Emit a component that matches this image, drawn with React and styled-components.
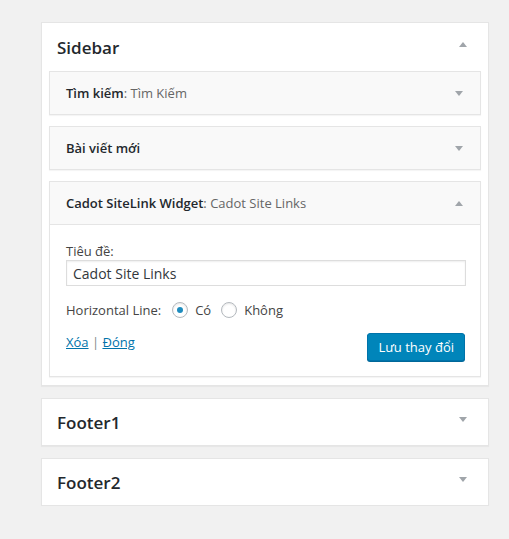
import React from 'react';
import styled, { createGlobalStyle } from 'styled-components';

const Global = createGlobalStyle`
  html, body {
    margin: 0;
    padding: 0;
    background: #f1f1f1;
  }
  body {
    font-family: "Open Sans", "Noto Sans", sans-serif;
    color: #23282d;
  }
`;

const Page = styled.div`
  width: 448px;
  padding: 22px 0 0 41px;
  display: flex;
  flex-direction: column;
  gap: 12px;
`;

const Area = styled.div`
  background: #fff;
  border: 1px solid #e5e5e5;
  box-shadow: 0 1px 1px rgba(0, 0, 0, 0.04);
`;

const AreaHead = styled.div`
  display: flex;
  align-items: center;
  justify-content: space-between;
  height: ${(p) => p.$h}px;
  padding: 0 21px 0 15px;
`;

const AreaTitle = styled.h2`
  margin: 0;
  font-size: 17px;
  font-weight: 600;
  color: #23282d;
  margin-top: ${(p) => p.$dy || 0}px;
`;

const Arrow = styled.span`
  width: 0;
  height: 0;
  border-left: 4px solid transparent;
  border-right: 4px solid transparent;
  ${(p) =>
    p.$up
      ? 'border-bottom: 5px solid #a0a5aa;'
      : 'border-top: 5px solid #a0a5aa;'}
  margin-top: ${(p) => p.$dy || 0}px;
`;

const Widgets = styled.div`
  display: flex;
  flex-direction: column;
  gap: 11px;
  padding: 0 7px 8px 7px;
`;

const Widget = styled.div`
  background: #fff;
  border: 1px solid #e5e5e5;
  box-shadow: 0 1px 1px rgba(0, 0, 0, 0.04);
`;

const WidgetHead = styled.div`
  display: flex;
  align-items: center;
  justify-content: space-between;
  height: 42px;
  padding: 0 17px 0 16px;
  background: #f9f9f9;
  font-size: 13px;
`;

const WidgetName = styled.span`
  font-weight: 600;
  color: #23282d;
`;

const WidgetSub = styled.span`
  font-weight: 400;
  color: #666;
`;

const WidgetBody = styled.div`
  border-top: 1px solid #e5e5e5;
  padding: 17px 15px 15px 16px;
  font-size: 13px;
  color: #444;
`;

const Label = styled.div`
  line-height: 18px;
`;

const Input = styled.input`
  box-sizing: border-box;
  width: 400px;
  height: 26px;
  margin: 0;
  padding: 0 6px;
  border: 1px solid #ddd;
  box-shadow: inset 0 1px 2px rgba(0, 0, 0, 0.07);
  font-family: "Open Sans", sans-serif;
  font-size: 14px;
  color: #32373c;
  outline: none;
`;

const RadioRow = styled.div`
  display: flex;
  align-items: center;
  margin-top: 14px;
  height: 20px;
`;

const RadioLabel = styled.label`
  display: flex;
  align-items: center;
  margin-left: ${(p) => p.$ml}px;
`;

const Radio = styled.span`
  box-sizing: border-box;
  width: 16px;
  height: 16px;
  border-radius: 50%;
  border: 1px solid #b4b9be;
  box-shadow: inset 0 1px 2px rgba(0, 0, 0, 0.1);
  background: #fff;
  display: flex;
  align-items: center;
  justify-content: center;
  margin-right: 7px;
  &::after {
    content: '';
    width: 6px;
    height: 6px;
    border-radius: 50%;
    background: ${(p) => (p.$on ? '#1e8cbe' : 'transparent')};
  }
`;

const Actions = styled.div`
  display: flex;
  justify-content: space-between;
  align-items: flex-start;
  margin-top: 13px;
`;

const Links = styled.div`
  margin-top: 0;
  color: #82878c;
`;

const Link = styled.a`
  color: #0073aa;
  text-decoration: underline;
`;

const Button = styled.button`
  height: 28px;
  padding: 0 10px;
  background: #0085ba;
  border: 1px solid #0073aa;
  border-radius: 3px;
  box-shadow: 0 1px 0 #006799;
  color: #fff;
  font-family: "Open Sans", sans-serif;
  font-size: 13px;
`;

export default function App() {
  return (
    <>
      <Global />
      <Page>
        <Area>
          <AreaHead $h={48}>
            <AreaTitle $dy={1}>Sidebar</AreaTitle>
            <Arrow $up $dy={-6} />
          </AreaHead>
          <Widgets>
            <Widget>
              <WidgetHead>
                <span>
                  <WidgetName>Tìm kiếm</WidgetName>
                  <WidgetSub>: Tìm Kiếm</WidgetSub>
                </span>
                <Arrow />
              </WidgetHead>
            </Widget>
            <Widget>
              <WidgetHead>
                <WidgetName>Bài viết mới</WidgetName>
                <Arrow />
              </WidgetHead>
            </Widget>
            <Widget>
              <WidgetHead>
                <span>
                  <WidgetName>Cadot SiteLink Widget</WidgetName>
                  <WidgetSub>: Cadot Site Links</WidgetSub>
                </span>
                <Arrow $up />
              </WidgetHead>
              <WidgetBody>
                <Label>Tiêu đề:</Label>
                <Input defaultValue="Cadot Site Links" />
                <RadioRow>
                  Horizontal Line:
                  <RadioLabel $ml={11}>
                    <Radio $on />
                    Có
                  </RadioLabel>
                  <RadioLabel $ml={10}>
                    <Radio />
                    Không
                  </RadioLabel>
                </RadioRow>
                <Actions>
                  <Links>
                    <Link>Xóa</Link> | <Link>Đóng</Link>
                  </Links>
                  <Button>Lưu thay đổi</Button>
                </Actions>
              </WidgetBody>
            </Widget>
          </Widgets>
        </Area>
        <Area>
          <AreaHead $h={46}>
            <AreaTitle>Footer1</AreaTitle>
            <Arrow $dy={-5} />
          </AreaHead>
        </Area>
        <Area>
          <AreaHead $h={46}>
            <AreaTitle>Footer2</AreaTitle>
            <Arrow $dy={-5} />
          </AreaHead>
        </Area>
      </Page>
    </>
  );
}
